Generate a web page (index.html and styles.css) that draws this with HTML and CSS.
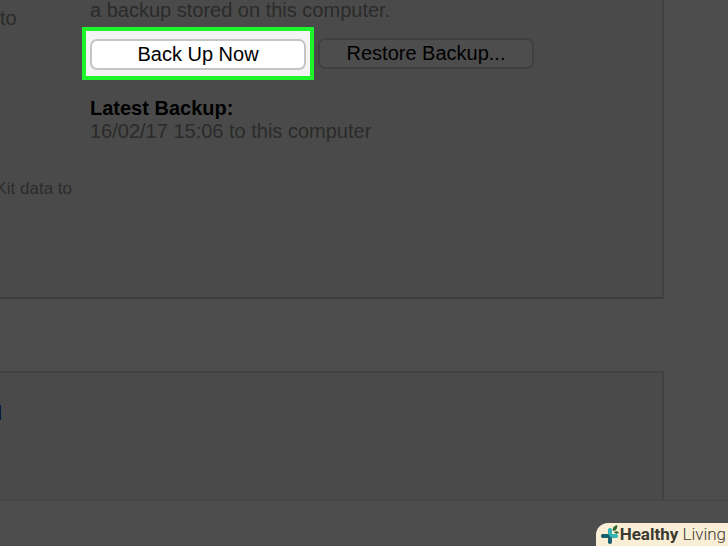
FILE: index.html
```
<!DOCTYPE html>
<html lang="en">

<head>
    <meta charset="UTF-8">
    <meta name="viewport" content="width=device-width, initial-scale=1.0">
    <title>Backups</title>
    <link rel="stylesheet" href="styles.css">
</head>

<body>
    <main class="content">
        <section class="panel backups">
            <div class="automatic">
                <p class="option">to</p>
                <p class="note">Kit data to</p>
            </div>
            <div class="manual">
                <p class="description">a backup stored on this computer.</p>
                <div class="actions">
                    <div class="highlight">
                        <button class="btn btn-active">Back Up Now</button>
                    </div>
                    <button class="btn">Restore Backup...</button>
                </div>
                <h2 class="latest">Latest Backup:</h2>
                <p class="date">16/02/17 15:06 to this computer</p>
            </div>
        </section>
        <section class="panel options">
            <p class="option-label">l</p>
        </section>
    </main>
    <footer class="bottom-bar"></footer>

    <div class="brand">
        <svg class="brand-icon" viewBox="0 0 20 20" aria-hidden="true">
            <path d="M8 4q2-2 4 0v6H8z" fill="#35b5b5" />
            <path d="M10 9h7q2 2 0 4h-7z" fill="#35b5b5" />
            <path d="M2 9h8v4H2q-2-2 0-4z" fill="#17616b" />
            <path d="M8 12h4v6q-2 2-4 0z" fill="#1c6470" />
            <path d="M8 9h4v4z" fill="#35b5b5" />
            <path d="M13 6c-1-3 1-5 4-6 1 3-1 6-4 6z" fill="#2e6b2c" />
            <path d="M14 7c2-1 4-1 5 1-2 1-4 1-5-1z" fill="#2e6b2c" />
        </svg>
        <span class="brand-name"><strong>Healthy</strong> Living</span>
    </div>
</body>

</html>
```
FILE: styles.css
```
* {
    padding: 0;
    margin: 0;
    box-sizing: border-box;
}

body {
    min-height: 100vh;
    display: flex;
    flex-direction: column;
    overflow: hidden;
    background: #4d4d4d;
    color: #2b2b2b;
    font-family: "Liberation Sans", Arial, sans-serif;
    font-size: 20px;
    line-height: 23px;
}

.content {
    flex: 1;
    display: flex;
    flex-direction: column;
    gap: 72px;
    padding-right: 64px;
}

.panel {
    background: #4a4a4a;
    border-right: 2px solid #414141;
}

.backups {
    display: flex;
    padding-bottom: 97px;
    border-bottom: 2px solid #3f3f3f;
}

.automatic {
    width: 82px;
    display: flex;
    flex-direction: column;
    align-items: flex-end;
    gap: 147px;
    padding-top: 7px;
    overflow: hidden;
    white-space: nowrap;
}

.option {
    width: 82px;
}

.note {
    padding-right: 10px;
    font-size: 17px;
}

.description,
.latest,
.date {
    padding-left: 8px;
}

.manual {
    margin-top: -1px;
}

.actions {
    display: flex;
    align-items: center;
    gap: 4px;
    margin: 5px 0 17px;
}

.highlight {
    padding: 8px 4px 6px;
    border: 4px solid #1df52b;
    background: #f4f4f4;
}

.btn {
    display: block;
    width: 216px;
    height: 31px;
    border: 2px solid #404040;
    border-radius: 7px;
    background: #4d4d4d;
    color: #000;
    font: inherit;
}

.btn-active {
    border-color: #c4c6c4;
    background: #fff;
}

.latest {
    color: #000;
    font-size: 20px;
}

.options {
    flex: 1;
    padding-top: 29px;
    border-top: 2px solid #414141;
}

.option-label {
    width: 2px;
    display: flex;
    justify-content: flex-end;
    overflow: hidden;
    color: #00001c;
}

.bottom-bar {
    height: 46px;
    border-top: 1px solid #454545;
}

.brand {
    position: absolute;
    right: 0;
    bottom: 0;
    display: flex;
    align-items: center;
    height: 23px;
    padding: 0 2px 0 4px;
    border-radius: 12px 0 0 0;
    background: #fbeed6;
    color: #3a3a32;
    font-family: Roboto, sans-serif;
    font-size: 17px;
    font-weight: 300;
}

.brand-icon {
    width: 20px;
    height: 20px;
}

.brand-name strong {
    font-weight: 700;
}
```
